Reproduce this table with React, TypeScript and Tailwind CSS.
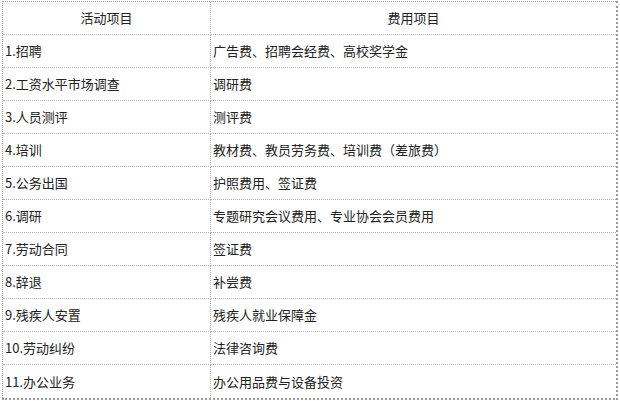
import React from "react";

const rows: [string, string][] = [
  ["1.招聘", "广告费、招聘会经费、高校奖学金"],
  ["2.工资水平市场调查", "调研费"],
  ["3.人员测评", "测评费"],
  ["4.培训", "教材费、教员劳务费、培训费（差旅费）"],
  ["5.公务出国", "护照费用、签证费"],
  ["6.调研", "专题研究会议费用、专业协会会员费用"],
  ["7.劳动合同", "签证费"],
  ["8.辞退", "补尝费"],
  ["9.残疾人安置", "残疾人就业保障金"],
  ["10.劳动纠纷", "法律咨询费"],
  ["11.办公业务", "办公用品费与设备投资"],
];

export default function App() {
  return (
    <div
      className="w-[620px] h-[401px] bg-white pt-[1px] pl-[2px]"
      style={{ fontFamily: '"Noto Sans CJK SC", "Noto Sans", sans-serif' }}
    >
      <div className="w-[616px] h-[399px] border-l border-t border-r-2 border-b-2 border-dotted border-[#9a9a9a] grid grid-cols-[208px_1fr] grid-rows-[repeat(12,1fr)] text-[13px] text-[#222]">
        <div className="flex items-center justify-center border-r border-b border-dotted border-[#b4b4b4]">活动项目</div>
        <div className="flex items-center justify-center border-b border-dotted border-[#b4b4b4]">费用项目</div>
        {rows.map(([a, b], i) => (
          <React.Fragment key={i}>
            <div
              className={`flex items-center pl-[2px] border-r border-dotted border-[#b4b4b4] ${i < rows.length - 1 ? "border-b" : ""}`}
            >
              {a}
            </div>
            <div
              className={`flex items-center pl-[2px] border-dotted border-[#b4b4b4] ${i < rows.length - 1 ? "border-b" : ""}`}
            >
              {b}
            </div>
          </React.Fragment>
        ))}
      </div>
    </div>
  );
}
